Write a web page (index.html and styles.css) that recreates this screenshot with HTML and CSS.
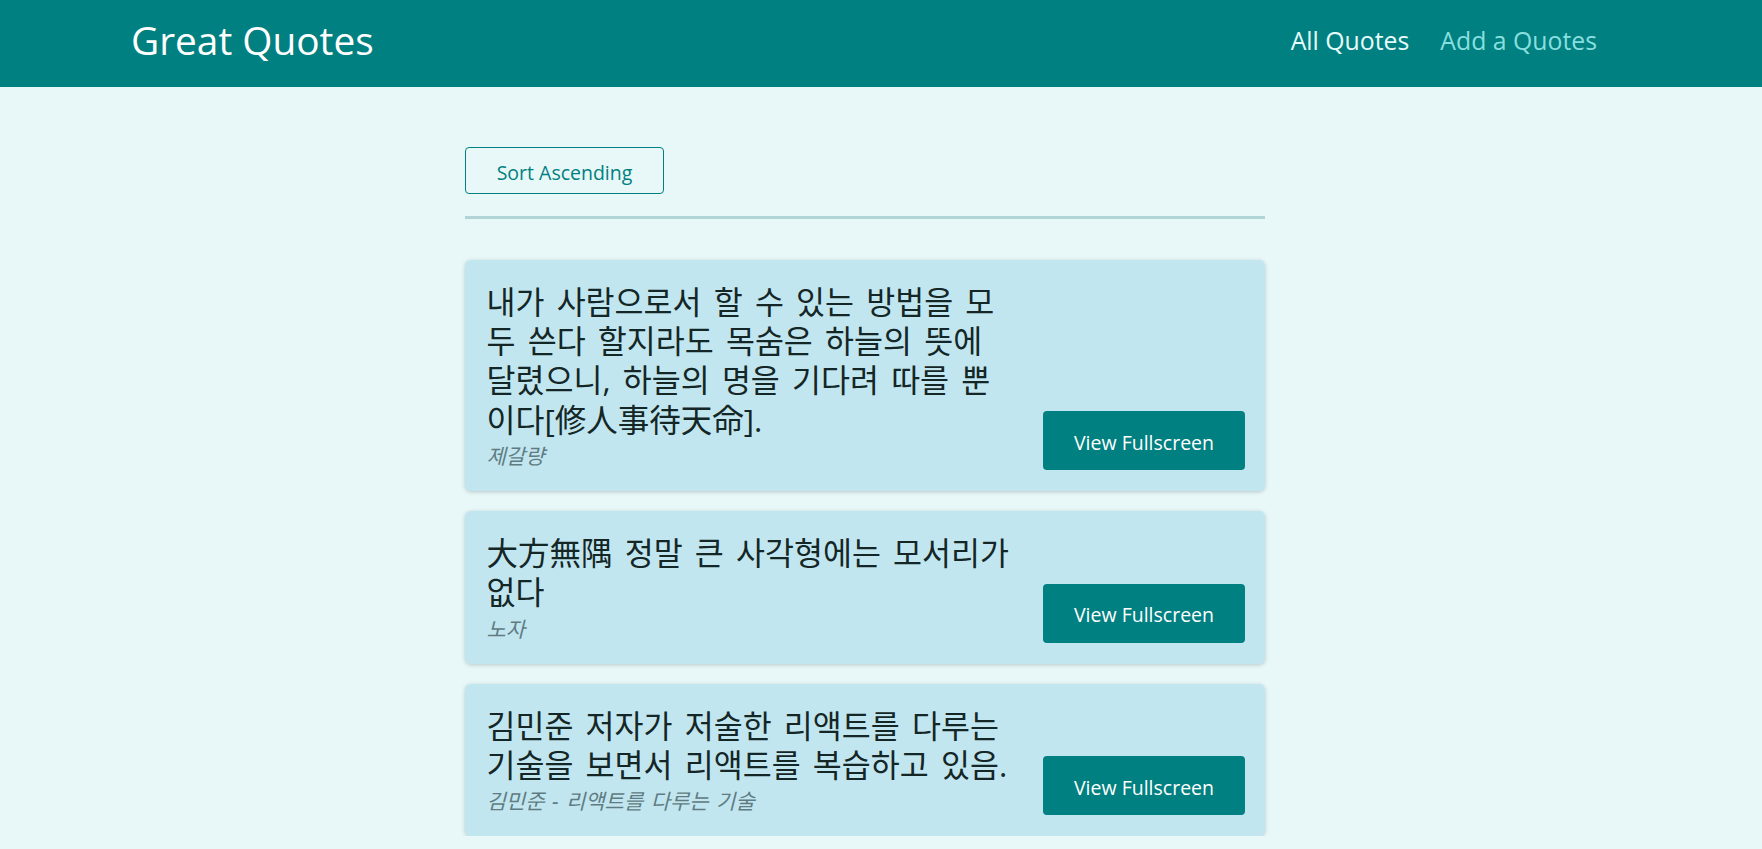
FILE: index.html
```html
<!DOCTYPE html>
<html lang="ko">
<head>
<meta charset="utf-8">
<title>Great Quotes</title>
<link rel="stylesheet" href="styles.css">
</head>
<body>
<header class="header">
  <div class="logo">Great Quotes</div>
  <nav class="nav">
    <ul>
      <li><a href="#" class="active">All Quotes</a></li>
      <li><a href="#">Add a Quotes</a></li>
    </ul>
  </nav>
</header>
<main class="main">
  <div class="sorting">
    <button class="sort-btn">Sort Ascending</button>
  </div>
  <ul class="list">
    <li class="item">
      <figure class="quote">
        <blockquote>내가 사람으로서 할 수 있는 방법을 모두 쓴다 할지라도 목숨은 하늘의 뜻에 달렸으니, 하늘의 명을 기다려 따를 뿐이다[修人事待天命].</blockquote>
        <figcaption>제갈량</figcaption>
      </figure>
      <a class="btn" href="#">View Fullscreen</a>
    </li>
    <li class="item">
      <figure class="quote">
        <blockquote>大方無隅 정말 큰 사각형에는 모서리가 없다</blockquote>
        <figcaption>노자</figcaption>
      </figure>
      <a class="btn" href="#">View Fullscreen</a>
    </li>
    <li class="item">
      <figure class="quote">
        <blockquote>김민준 저자가 저술한 리액트를 다루는 기술을 보면서 리액트를 복습하고 있음.</blockquote>
        <figcaption>김민준 - 리액트를 다루는 기술</figcaption>
      </figure>
      <a class="btn" href="#">View Fullscreen</a>
    </li>
  </ul>
</main>
</body>
</html>
```

FILE: styles.css
```css
* { box-sizing: border-box; }

html, body {
  margin: 0;
  padding: 0;
  background-color: #e8f8f8;
  font-family: "Open Sans", "Noto Sans CJK KR", sans-serif;
  overflow: hidden;
}

.header {
  height: 86.5px;
  background-color: #008080;
  display: flex;
  align-items: center;
  justify-content: space-between;
  padding: 0 165px 0 131px;
}

.logo {
  color: #ffffff;
  font-size: 38.8px;
  line-height: 1;
  padding-bottom: 6px;
}

.nav ul {
  list-style: none;
  margin: 0;
  padding: 0 0 6px 0;
  display: flex;
  gap: 31px;
}

.nav a {
  text-decoration: none;
  font-size: 24.8px;
  color: #88dfdf;
}

.nav a.active {
  color: #e6fcfc;
}

.main {
  width: 800px;
  margin-left: calc(50% - 416px);
  padding-top: 60.5px;
}

.sorting {
  padding-bottom: 22px;
  border-bottom: 3px solid #b1d4d6;
  margin-bottom: 40.6px;
}

.sort-btn {
  width: 199px;
  height: 47px;
  background: transparent;
  border: 1px solid #008080;
  border-radius: 4px;
  color: #008080;
  font-family: "Open Sans", "Noto Sans CJK KR", sans-serif;
  font-size: 19.5px;
  padding: 3px 0 0 0;
  display: block;
}

.list {
  list-style: none;
  margin: 0;
  padding: 0;
  display: flex;
  flex-direction: column;
  gap: 20px;
}

.item {
  background-color: #c2e6f0;
  border-radius: 6px;
  box-shadow: 0 1px 4px rgba(0, 0, 0, 0.2);
  padding: 22px 20px 20.8px 21.5px;
  display: flex;
  justify-content: space-between;
  align-items: flex-end;
}

.quote {
  margin: 0;
  width: 530px;
}

.quote blockquote {
  margin: 0;
  font-size: 31.5px;
  line-height: 39.4px;
  word-spacing: 4px;
  color: #142626;
}

.quote figcaption {
  font-style: italic;
  font-size: 21px;
  line-height: 27px;
  padding-top: 4px;
  word-spacing: 2px;
  color: #5f7c82;
}

.btn {
  width: 202px;
  height: 59px;
  padding-top: 3px;
  display: flex;
  align-items: center;
  justify-content: center;
  background-color: #008080;
  color: #ffffff;
  text-decoration: none;
  border-radius: 4px;
  font-size: 19.5px;
}
```
